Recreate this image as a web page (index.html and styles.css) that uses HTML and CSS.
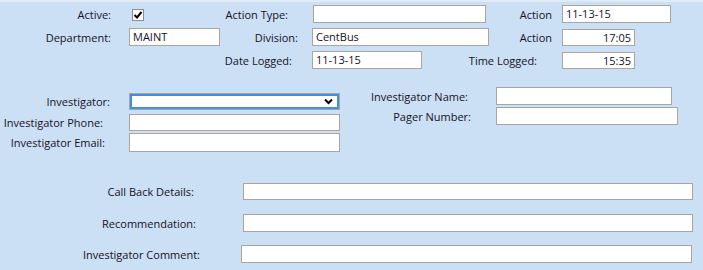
FILE: index.html
```html
<!DOCTYPE html>
<html lang="en">
<head>
    <meta charset="UTF-8">
    <title>Investigation Details</title>
    <link rel="stylesheet" href="styles.css">
</head>
<body>
    <div class="form">
        <!-- Header fields -->
        <div class="row row-1">
            <span class="lbl l-active">Active:</span>
            <span class="check">
                <svg width="10" height="10" viewBox="0 0 10 10"><polyline points="1.5,5 4,7.5 8.5,2" fill="none" stroke="#000" stroke-width="2"/></svg>
            </span>
            <span class="lbl l-acttype">Action Type:</span>
            <div class="box b-acttype"></div>
            <span class="lbl l-action1">Action</span>
            <div class="box b-action1">11-13-15</div>
        </div>
        <div class="row row-2">
            <span class="lbl l-dept">Department:</span>
            <div class="box b-dept">MAINT</div>
            <span class="lbl l-div">Division:</span>
            <div class="box b-div">CentBus</div>
            <span class="lbl l-action2">Action</span>
            <div class="box num b-action2">17:05</div>
        </div>
        <div class="row row-3">
            <span class="lbl l-datelog">Date Logged:</span>
            <div class="box b-datelog">11-13-15</div>
            <span class="lbl l-timelog">Time Logged:</span>
            <div class="box num b-timelog">15:35</div>
        </div>

        <!-- Investigator block -->
        <div class="invest">
            <div class="invest-left">
                <div class="row">
                    <span class="lbl l-inv">Investigator:</span>
                    <div class="combo b-inv">
                        <svg width="9" height="7" viewBox="0 0 9 7"><polyline points="1,1.5 4.5,5 8,1.5" fill="none" stroke="#000" stroke-width="2"/></svg>
                    </div>
                </div>
                <div class="row row-phone">
                    <span class="lbl l-phone">Investigator Phone:</span>
                    <div class="box b-phone"></div>
                </div>
                <div class="row row-email">
                    <span class="lbl l-email">Investigator Email:</span>
                    <div class="box b-email"></div>
                </div>
            </div>
            <div class="invest-right">
                <div class="row">
                    <span class="lbl l-name">Investigator Name:</span>
                    <div class="box b-name"></div>
                </div>
                <div class="row row-pager">
                    <span class="lbl l-pager">Pager Number:</span>
                    <div class="box b-pager"></div>
                </div>
            </div>
        </div>

        <!-- Notes -->
        <div class="notes">
            <div class="row">
                <span class="lbl l-callback">Call Back Details:</span>
                <div class="box b-callback"></div>
            </div>
            <div class="row row-rec">
                <span class="lbl l-rec">Recommendation:</span>
                <div class="box b-rec"></div>
            </div>
            <div class="row row-comment">
                <span class="lbl l-comment">Investigator Comment:</span>
                <div class="box b-comment"></div>
            </div>
        </div>
    </div>
</body>
</html>
```

FILE: styles.css
```css
/* Page */
body {
    margin: 0;
}

.form {
    width: 703px;
    height: 270px;
    box-sizing: border-box;
    background-color: #cbdff5;
    border-top: 2px solid #e2eaf5;
    font-family: "Open Sans", "Noto Sans", sans-serif;
    font-size: 11px;
    color: #16121f;
    overflow: hidden;
}

/* Generic rows, labels and boxes */
.row {
    display: flex;
    align-items: center;
    height: 18px;
}

.lbl {
    flex: none;
    text-align: right;
    white-space: nowrap;
}

.box {
    flex: none;
    height: 18px;
    box-sizing: border-box;
    background-color: #fff;
    border: 1px solid #a8a69e;
    padding: 0 3px;
    line-height: 16px;
    white-space: nowrap;
}

.box.num {
    text-align: right;
}

.check {
    flex: none;
    width: 12px;
    height: 12px;
    margin-left: 21px;
    margin-top: 2px;
    box-sizing: border-box;
    background-color: #fff;
    border: 1px solid #8d8d8d;
    display: flex;
    justify-content: center;
    align-items: center;
}

.combo {
    flex: none;
    height: 17px;
    box-sizing: border-box;
    background-color: #fff;
    border: 1px solid #a8a69e;
    box-shadow: inset 0 0 0 2px #3f8fe6;
    display: flex;
    justify-content: flex-end;
    align-items: center;
    padding-right: 6px;
}

/* Header rows */
.row-1 { margin-top: 3px; }
.row-2 { margin-top: 5px; }
.row-3 { margin-top: 5px; }

.l-active { width: 111px; }
.l-acttype { width: 144px; }
.b-acttype { margin-left: 25px; width: 173px; }
.l-action1 { width: 66px; }
.b-action1 { margin-left: 10px; width: 109px; }

.l-dept { width: 111px; }
.b-dept { margin-left: 18px; width: 91px; }
.l-div { width: 78px; }
.b-div { margin-left: 14px; width: 177px; }
.l-action2 { width: 63px; }
.b-action2 { margin-left: 10px; width: 73px; height: 17px; }

.l-datelog { width: 292px; }
.b-datelog { margin-left: 20px; width: 110px; }
.l-timelog { width: 115px; }
.b-timelog { margin-left: 25px; width: 73px; height: 17px; }

/* Investigator block */
.invest {
    display: flex;
    align-items: flex-start;
}

.invest-left {
    width: 340px;
    margin-top: 23px;
}

.invest-right {
    margin-top: 18px;
}

.row-phone { margin-top: 3px; }
.row-email { margin-top: 2px; height: 19px; }
.row-pager { margin-top: 2px; }

.l-inv { width: 110px; }
.b-inv { margin-left: 19px; width: 211px; }
.l-phone { width: 103px; }
.b-phone { margin-left: 26px; width: 211px; height: 17px; }
.l-email { width: 105px; }
.b-email { margin-left: 24px; width: 211px; height: 19px; }

.l-name { width: 128px; }
.b-name { margin-left: 28px; width: 176px; }
.l-pager { width: 131px; }
.b-pager { margin-left: 25px; width: 182px; }

/* Notes */
.notes {
    margin-top: 30px;
}

.row-rec { margin-top: 14px; }
.row-comment { margin-top: 13px; }

.l-callback { width: 194px; }
.b-callback { margin-left: 49px; width: 450px; height: 17px; }
.l-rec { width: 196px; }
.b-rec { margin-left: 47px; width: 450px; }
.l-comment { width: 200px; }
.b-comment { margin-left: 41px; width: 451px; }
```
